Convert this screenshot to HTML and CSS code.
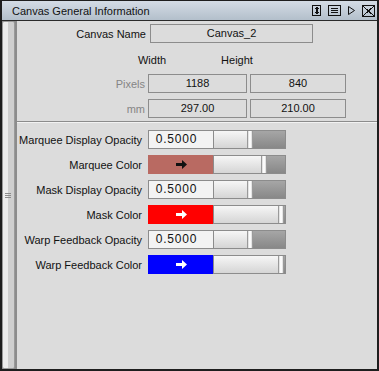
FILE: index.html
```html
<!DOCTYPE html>
<html lang="en">

<head>
    <meta charset="UTF-8">
    <title>Canvas General Information</title>
    <link rel="stylesheet" href="styles.css">
</head>

<body>
    <div class="window">
        <div class="titlebar">
            <span class="title">Canvas General Information</span>
            <div class="tools">
                <svg class="tool t-size" width="9" height="11" viewBox="0 0 9 11">
                    <rect x="0.5" y="0.5" width="8" height="10" fill="none" stroke="#111" />
                    <path d="M2 4L4.5 1.5L7 4ZM2 7L4.5 9.5L7 7Z" fill="#111" />
                    <rect x="3.5" y="3" width="2" height="5" fill="#111" />
                </svg>
                <svg class="tool t-menu" width="13" height="11" viewBox="0 0 13 11">
                    <rect x="0.5" y="0.5" width="12" height="10" fill="none" stroke="#111" />
                    <path d="M3 3.5H10M3 5.5H10M3 7.5H10" stroke="#111" />
                </svg>
                <svg class="tool t-play" width="8" height="9" viewBox="0 0 8 9">
                    <path d="M0.5 0.5L6.5 4.5L0.5 8.5Z" fill="none" stroke="#111" />
                </svg>
                <svg class="tool t-close" width="13" height="12" viewBox="0 0 13 12">
                    <rect x="0.5" y="0.5" width="12" height="11" fill="none" stroke="#111" />
                    <path d="M1 1L12 11M12 1L1 11" stroke="#111" />
                </svg>
            </div>
        </div>

        <div class="frame">
            <div class="dock">
                <div class="dock-bar"><span class="grip"></span></div>
            </div>

            <div class="content">
                <div class="row row-name">
                    <span class="lbl">Canvas Name</span>
                    <div class="field field-name">Canvas_2</div>
                </div>

                <div class="row row-head">
                    <span class="head head-w">Width</span>
                    <span class="head head-h">Height</span>
                </div>

                <div class="row row-dim">
                    <span class="lbl">Pixels</span>
                    <div class="field fw">1188</div>
                    <div class="field fh">840</div>
                </div>
                <div class="row row-dim">
                    <span class="lbl">mm</span>
                    <div class="field fw">297.00</div>
                    <div class="field fh">210.00</div>
                </div>

                <div class="sep"></div>

                <div class="attrs">
                    <div class="row attr">
                        <span class="lbl">Marquee Display Opacity</span>
                        <div class="field num">0.5000</div>
                        <div class="slider"><div class="fill" style="width: 33px"></div><div class="knob"></div></div>
                    </div>
                    <div class="row attr attr-color">
                        <span class="lbl">Marquee Color</span>
                        <div class="swatch swatch-marquee">
                            <svg width="11" height="9" viewBox="0 0 11 9"><path d="M0 3H6V0L11 4.5L6 9V6H0Z" fill="#111" /></svg>
                        </div>
                        <div class="slider"><div class="fill" style="width: 47px"></div><div class="knob"></div></div>
                    </div>
                    <div class="row attr">
                        <span class="lbl">Mask Display Opacity</span>
                        <div class="field num">0.5000</div>
                        <div class="slider"><div class="fill" style="width: 33px"></div><div class="knob"></div></div>
                    </div>
                    <div class="row attr attr-color">
                        <span class="lbl">Mask Color</span>
                        <div class="swatch swatch-mask">
                            <svg width="11" height="9" viewBox="0 0 11 9"><path d="M0 3H6V0L11 4.5L6 9V6H0Z" fill="#fff" /></svg>
                        </div>
                        <div class="slider"><div class="fill" style="width: 64px"></div><div class="knob"></div></div>
                    </div>
                    <div class="row attr">
                        <span class="lbl">Warp Feedback Opacity</span>
                        <div class="field num">0.5000</div>
                        <div class="slider"><div class="fill" style="width: 33px"></div><div class="knob"></div></div>
                    </div>
                    <div class="row attr attr-color">
                        <span class="lbl">Warp Feedback Color</span>
                        <div class="swatch swatch-warp">
                            <svg width="11" height="9" viewBox="0 0 11 9"><path d="M0 3H6V0L11 4.5L6 9V6H0Z" fill="#fff" /></svg>
                        </div>
                        <div class="slider"><div class="fill" style="width: 64px"></div><div class="knob"></div></div>
                    </div>
                </div>
            </div>
        </div>
    </div>
</body>

</html>
```

FILE: styles.css
```css
* {
    padding: 0;
    margin: 0;
    box-sizing: border-box;
}

body {
    font-family: "Liberation Sans", Arial, sans-serif;
    font-size: 11px;
    color: #111;
    background-color: #1e1e1e;
}

.window {
    width: 379px;
    height: 371px;
    border: 2px solid #1e1e1e;
    border-top-width: 1px;
    display: flex;
    flex-direction: column;
}

/* title bar */
.titlebar {
    height: 20px;
    flex: none;
    display: flex;
    align-items: center;
    padding-left: 10px;
    padding-right: 2px;
    border-bottom: 1px solid #2a2a2a;
    background: linear-gradient(#d4dce5, #b3bfcb);
}

.title {
    font-size: 11px;
    flex: 1;
}

.tools {
    display: flex;
    align-items: center;
}

.tool {
    display: block;
    shape-rendering: crispEdges;
}

.t-menu {
    margin-left: 7px;
}

.t-play {
    margin-left: 7px;
    shape-rendering: auto;
}

.t-close {
    margin-left: 6px;
}

/* body */
.frame {
    flex: 1;
    display: flex;
}

.dock {
    width: 15px;
    flex: none;
    border-right: 2px solid #8c8c8c;
    background-color: #8c8c8c;
}

.dock-bar {
    height: 100%;
    border: 1px solid #9a9a9a;
    border-radius: 2px;
    background: linear-gradient(to right, #ececec 0, #ececec 45%, #cfcfcf 45%);
    display: flex;
    align-items: center;
    justify-content: center;
}

.grip {
    width: 6px;
    height: 5px;
    margin-left: -1px;
    border-top: 1px solid #8a8a8a;
    border-bottom: 1px solid #8a8a8a;
    background: linear-gradient(transparent 1px, #8a8a8a 1px, #8a8a8a 2px, transparent 2px);
}

.content {
    flex: 1;
    background-color: #dcdcdc;
    padding-top: 3px;
}

.row {
    display: flex;
    align-items: center;
    height: 19px;
}

.lbl {
    flex: none;
    text-align: right;
}

.field {
    flex: none;
    height: 19px;
    border: 1px solid #8c8c8c;
    line-height: 17px;
    text-align: center;
}

.row-name .lbl {
    width: 129px;
    margin-right: 4px;
}

.field-name {
    width: 163px;
}

.row-head {
    margin-top: 7px;
}

.head {
    text-align: center;
}

.head-w {
    width: 48px;
    margin-left: 111px;
}

.head-h {
    width: 50px;
    margin-left: 36px;
}

.row-dim {
    margin-top: 5px;
}

.row-dim + .row-dim {
    margin-top: 6px;
}

.row-dim .lbl {
    width: 128px;
    margin-right: 3px;
    color: #858585;
}

.fw {
    width: 99px;
    margin-right: 3px;
}

.fh {
    width: 96px;
}

.sep {
    margin-top: 3px;
    height: 2px;
    border-top: 1px solid #8c8c8c;
    border-bottom: 1px solid #f2f2f2;
}

/* attribute rows */
.attrs {
    display: flex;
    flex-direction: column;
    gap: 6px;
    margin-top: 7px;
}

.attr .lbl {
    width: 125px;
    margin-right: 6px;
}

.num {
    width: 66px;
    padding-right: 9px;
    font-size: 12px;
    letter-spacing: 0.8px;
    background-color: #f3f3f3;
}

.slider {
    width: 72px;
    height: 19px;
    flex: none;
    display: flex;
    border: 1px solid #8c8c8c;
    border-left: none;
    background: linear-gradient(#a6a6a6, #888);
}

.attr-color .slider {
    width: 73px;
    border-left: 1px solid #8c8c8c;
}

.fill {
    height: 100%;
    background: linear-gradient(#f6f6f6, #d5d5d5);
}

.knob {
    width: 6px;
    height: 100%;
    border-left: 1px solid #9a9a9a;
    border-right: 1px solid #9a9a9a;
    background: linear-gradient(to right, #d8d8d8, #fdfdfd 40%, #fdfdfd 60%, #d8d8d8);
}

.swatch {
    width: 65px;
    height: 19px;
    flex: none;
    display: flex;
    align-items: center;
    justify-content: center;
}

.swatch svg {
    display: block;
    margin-left: 1px;
}

.swatch-marquee {
    background-color: #b96a62;
}

.swatch-mask {
    background-color: #ff0000;
}

.swatch-warp {
    background-color: #0000ff;
}
```
